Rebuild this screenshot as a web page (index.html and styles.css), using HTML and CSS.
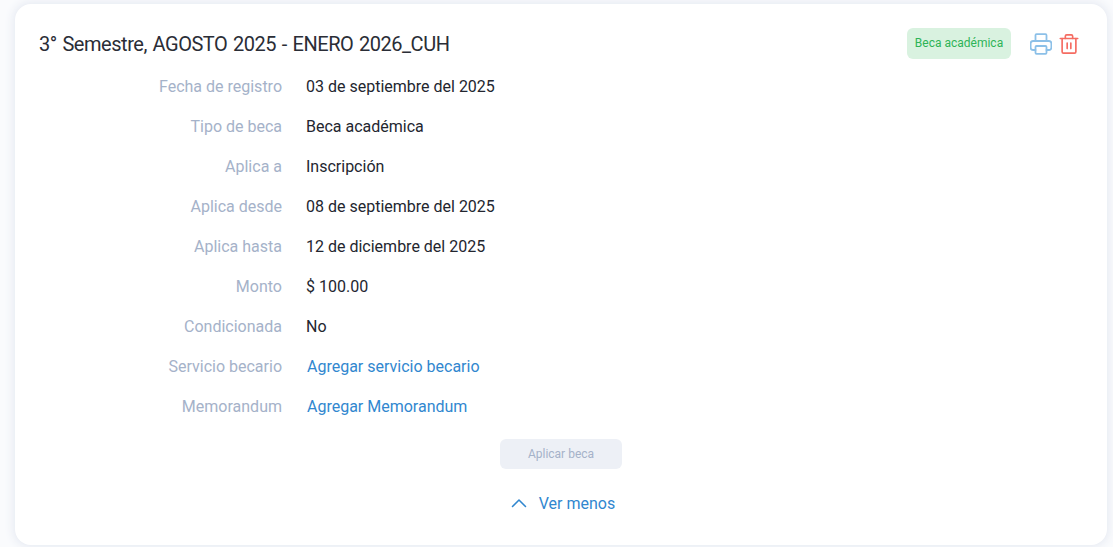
FILE: index.html
```html
<!DOCTYPE html>
<html lang="es">
<head>
<meta charset="utf-8">
<title>Beca</title>
<link rel="stylesheet" href="styles.css">
</head>
<body>
<section class="card">
  <header class="head">
    <h2 class="title">3° Semestre, AGOSTO 2025 - ENERO 2026_CUH</h2>
    <div class="actions">
      <span class="badge">Beca académica</span>
      <svg class="icon print" viewBox="1 1 22 22" fill="none" stroke="currentColor" stroke-width="1.8" stroke-linejoin="round" stroke-linecap="round"><path d="M6.500 9V3.200a1 1 0 0 1 1-1h9a1 1 0 0 1 1 1V9"/><path d="M6.500 18H4a2.400 2.400 0 0 1-2.400-2.400V11.400A2.400 2.400 0 0 1 4 9h16a2.400 2.400 0 0 1 2.400 2.400v4.200A2.400 2.400 0 0 1 20 18h-2.500"/><rect x="6.500" y="14" width="11" height="7.800" rx="1"/></svg>
      <svg class="icon trash" viewBox="0 0 24 24" fill="none" stroke="currentColor" stroke-width="1.8" stroke-linejoin="round" stroke-linecap="round"><path d="M2.500 6h19"/><path d="M4.500 6v14.500a1.500 1.500 0 0 0 1.500 1.500h12a1.500 1.500 0 0 0 1.500-1.500V6"/><path d="M8 6V3.500A1.500 1.500 0 0 1 9.500 2h5A1.500 1.500 0 0 1 16 3.500V6"/><path d="M10 11v6"/><path d="M14 11v6"/></svg>
    </div>
  </header>
  <dl class="rows">
    <div class="row"><dt>Fecha de registro</dt><dd>03 de septiembre del 2025</dd></div>
    <div class="row"><dt>Tipo de beca</dt><dd>Beca académica</dd></div>
    <div class="row"><dt>Aplica a</dt><dd>Inscripción</dd></div>
    <div class="row"><dt>Aplica desde</dt><dd>08 de septiembre del 2025</dd></div>
    <div class="row"><dt>Aplica hasta</dt><dd>12 de diciembre del 2025</dd></div>
    <div class="row"><dt>Monto</dt><dd>$ 100.00</dd></div>
    <div class="row"><dt>Condicionada</dt><dd>No</dd></div>
    <div class="row"><dt>Servicio becario</dt><dd><a class="link" href="#">Agregar servicio becario</a></dd></div>
    <div class="row"><dt>Memorandum</dt><dd><a class="link" href="#">Agregar Memorandum</a></dd></div>
  </dl>
  <div class="apply"><button class="apply-btn" type="button">Aplicar beca</button></div>
  <a class="more" href="#">
    <svg class="chev" viewBox="0 0 16 10" fill="none" stroke="currentColor" stroke-width="1.600" stroke-linecap="round" stroke-linejoin="round"><path d="M1.500 8.500 8 2l6.500 6.500"/></svg>
    <span>Ver menos</span>
  </a>
</section>
</body>
</html>
```
FILE: styles.css
```css
* { box-sizing: border-box; }
html, body { height: 100%; }
body {
  margin: 0;
  padding: 4px 6px 2px 15px;
  background: #fafbfd;
  font-family: "Roboto", "Noto Sans", sans-serif;
  font-size: 16px;
  overflow: hidden;
}
.card {
  height: 541px;
  background: #fff;
  border-radius: 16px;
  box-shadow: 0 0 10px 2px #e6eaf2;
  padding: 24px 24px 0 24px;
}
.head {
  display: flex;
  justify-content: space-between;
  align-items: flex-start;
  height: 41px;
}
.title {
  margin: 0;
  padding-top: 2px;
  font-size: 20px;
  line-height: 28px;
  font-weight: 400;
  letter-spacing: -.47px;
  word-spacing: 1.2px;
  color: #2a2d36;
}
.actions {
  display: flex;
  align-items: flex-start;
  margin-right: 3px;
}
.badge {
  width: 104px;
  height: 31px;
  border-radius: 6px;
  background: #d9f2e0;
  color: #2eb457;
  font-size: 12px;
  line-height: 30px;
  text-align: center;
  margin-right: 19px;
}
.icon { width: 22px; height: 22px; margin-top: 5px; }
.print { color: #8cc0e8; }
.trash { color: #f56c62; margin-left: 6px; }
.rows { margin: 0; }
.row {
  display: grid;
  grid-template-columns: 243px 1fr;
  column-gap: 24px;
  height: 40px;
  line-height: 24px;
  padding-top: 6px;
}
dt { text-align: right; color: #a5b2c9; }
dd { margin: 0; color: #23262f; }
.link { color: #3187cf; text-decoration: none; padding-left: 1px; }
.apply { display: flex; justify-content: center; margin-top: 10px; }
.apply-btn {
  width: 122px;
  height: 30px;
  border: 0;
  border-radius: 6px;
  background: #edf0f6;
  color: #a5b2c9;
  font: 12px/30px "Roboto", sans-serif;
  padding: 0;
}
.more {
  display: flex;
  justify-content: center;
  align-items: center;
  gap: 12px;
  margin-top: 20px;
  padding-left: 4px;
  height: 28px;
  color: #3187cf;
  text-decoration: none;
}
.chev { width: 16px; height: 10px; }
```
